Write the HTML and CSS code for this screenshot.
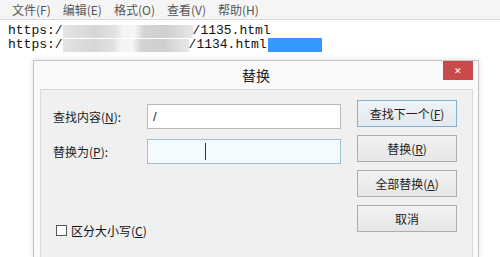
FILE: index.html
```html
<!DOCTYPE html>
<html lang="zh-CN">
<head>
<meta charset="UTF-8">
<meta name="viewport" content="width=device-width, initial-scale=1.0">
<title>记事本 - 替换</title>
<link rel="stylesheet" href="styles.css">
</head>
<body>
<div class="menubar">
    <span class="menu-item">文件(F)</span>
    <span class="menu-item">编辑(E)</span>
    <span class="menu-item">格式(O)</span>
    <span class="menu-item">查看(V)</span>
    <span class="menu-item">帮助(H)</span>
</div>
<div class="editor">
    <div class="line">https:/<span class="blur blur-a"></span>/1135.html</div>
    <div class="line">https:/<span class="blur blur-b"></span>/1134.html<span class="selection"></span></div>
</div>

<div class="dialog">
    <div class="titlebar">
        <span class="title">替换</span>
        <span class="close">&#x2715;</span>
    </div>
    <div class="dialog-body">
        <div class="fields">
            <div class="field-row">
                <label class="field-label" for="find">查找内容(<u>N</u>):</label>
                <input class="field-input" id="find" type="text" value="/">
            </div>
            <div class="field-row">
                <label class="field-label" for="repl">替换为(<u>P</u>):</label>
                <div class="field-input focused"><span class="caret"></span></div>
            </div>
            <div class="check-row">
                <span class="checkbox"></span>
                <span>区分大小写(<u>C</u>)</span>
            </div>
        </div>
        <div class="buttons">
            <button class="btn default">查找下一个(<u>F</u>)</button>
            <button class="btn">替换(<u>R</u>)</button>
            <button class="btn">全部替换(<u>A</u>)</button>
            <button class="btn">取消</button>
        </div>
    </div>
</div>
</body>
</html>
```

FILE: styles.css
```css
html, body {
overflow: hidden;
}
body {
margin: 0;
width: 500px;
height: 257px;
background-color: #fff;
font-family: "Noto Sans CJK SC", "Noto Sans", sans-serif;
position: relative;
}
.menubar {
height: 19px;
display: flex;
gap: 12px;
padding-left: 12px;
background-color: #f5f5f5;
border-bottom: 1px solid #dcdcdc;
font-size: 12px;
line-height: 19px;
color: #555;
}
.editor {
padding: 4px 0 0 8px;
font-family: "Liberation Mono", monospace;
font-size: 13px;
line-height: 14px;
color: #111;
}
.line {
display: flex;
align-items: center;
white-space: pre;
height: 14px;
}
.blur {
display: inline-block;
height: 13px;
background: linear-gradient(90deg, #e4e4e4 0, #d6d6d6 25%, #e2e2e2 40%, #f4f4f4 46%, #f6f6f6 55%, #d4d4d4 62%, #cfcfcf 80%, #e8e8e8 100%);
}
.blur-a {
width: 130px;
}
.blur-b {
width: 126px;
}
.selection {
display: inline-block;
width: 54px;
height: 14px;
margin-left: 1px;
background-color: #3399ff;
}

/* Replace dialog */
.dialog {
position: absolute;
left: 33px;
top: 60px;
width: 444px;
height: 196px;
background-color: #f9f9f9;
border: 1px solid #c3c3c3;
border-bottom: 0;
box-shadow: 0 0 6px rgba(0, 0, 0, 0.12);
}
.titlebar {
height: 28px;
display: flex;
align-items: center;
justify-content: center;
position: relative;
}
.title {
font-size: 14px;
color: #222;
}
.close {
position: absolute;
right: 5px;
top: 0;
width: 30px;
height: 19px;
background-color: #c94a4a;
color: #fff;
font-size: 9px;
line-height: 19px;
text-align: center;
}
.dialog-body {
margin: 0 5px 0 6px;
height: 168px;
box-sizing: border-box;
border: 1px solid #d9d9d9;
border-bottom: 0;
background-color: #f0f0f0;
display: flex;
padding: 10px 0 0 12px;
font-size: 12px;
color: #222;
}
.fields {
width: 304px;
padding-top: 4px;
}
.field-row {
display: flex;
align-items: center;
height: 25px;
margin-bottom: 10px;
}
.field-label {
width: 94px;
}
.field-input {
width: 194px;
height: 25px;
box-sizing: border-box;
border: 1px solid #b5b8bd;
background-color: #fff;
padding: 0 5px;
font-family: "Liberation Sans", sans-serif;
font-size: 13px;
color: #222;
}
.field-input.focused {
border-color: #9cc1d8;
background-color: #f4fbfe;
position: relative;
}
.caret {
position: absolute;
left: 57px;
top: 3px;
width: 1px;
height: 17px;
background-color: #333;
}
.check-row {
display: flex;
align-items: center;
gap: 4px;
margin-top: 58px;
padding-left: 3px;
color: #111;
}
.checkbox {
width: 9px;
height: 9px;
border: 1px solid #555;
background-color: #fff;
}
.buttons {
display: flex;
flex-direction: column;
gap: 8px;
}
.btn {
width: 100px;
height: 27px;
border: 1px solid #adadad;
background: linear-gradient(#f2f2f2, #e6e6e6);
font-family: "Noto Sans CJK SC", sans-serif;
font-size: 12px;
color: #222;
padding: 0;
}
.btn.default {
border-color: #7fb0d6;
background: linear-gradient(#eef3f7, #e4e9ee);
}
```
